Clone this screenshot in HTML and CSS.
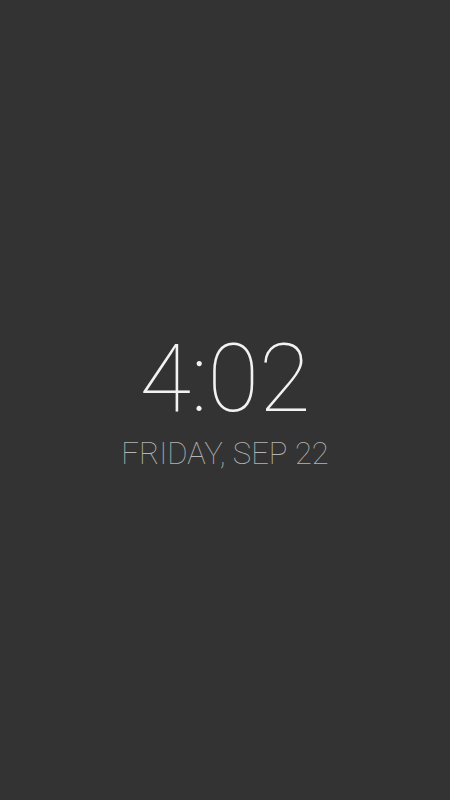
FILE: index.html
```html
<!DOCTYPE html>
<html>
<head>
<meta charset="utf-8">
<link rel="stylesheet" href="styles.css">
</head>
<body>
<main class="screen">
  <div class="clock">
    <div class="time">4:02</div>
    <div class="date">FRIDAY, SEP 22</div>
  </div>
</main>
</body>
</html>
```
FILE: styles.css
```css
html, body {
  margin: 0;
  padding: 0;
  background: #333333;
}
.screen {
  width: 450px;
  height: 800px;
  display: flex;
  flex-direction: column;
  align-items: center;
  justify-content: flex-start;
  font-family: Roboto, "Noto Sans", sans-serif;
}
.clock {
  margin-top: 332px;
  display: flex;
  flex-direction: column;
  align-items: center;
}
.time {
  font-size: 94px;
  font-weight: 100;
  color: #f2f2f2;
  line-height: 1;
}
.date {
  margin-top: 9px;
  font-size: 31px;
  font-weight: 100;
  color: #b4b4b4;
  line-height: 1.2;
}
```
